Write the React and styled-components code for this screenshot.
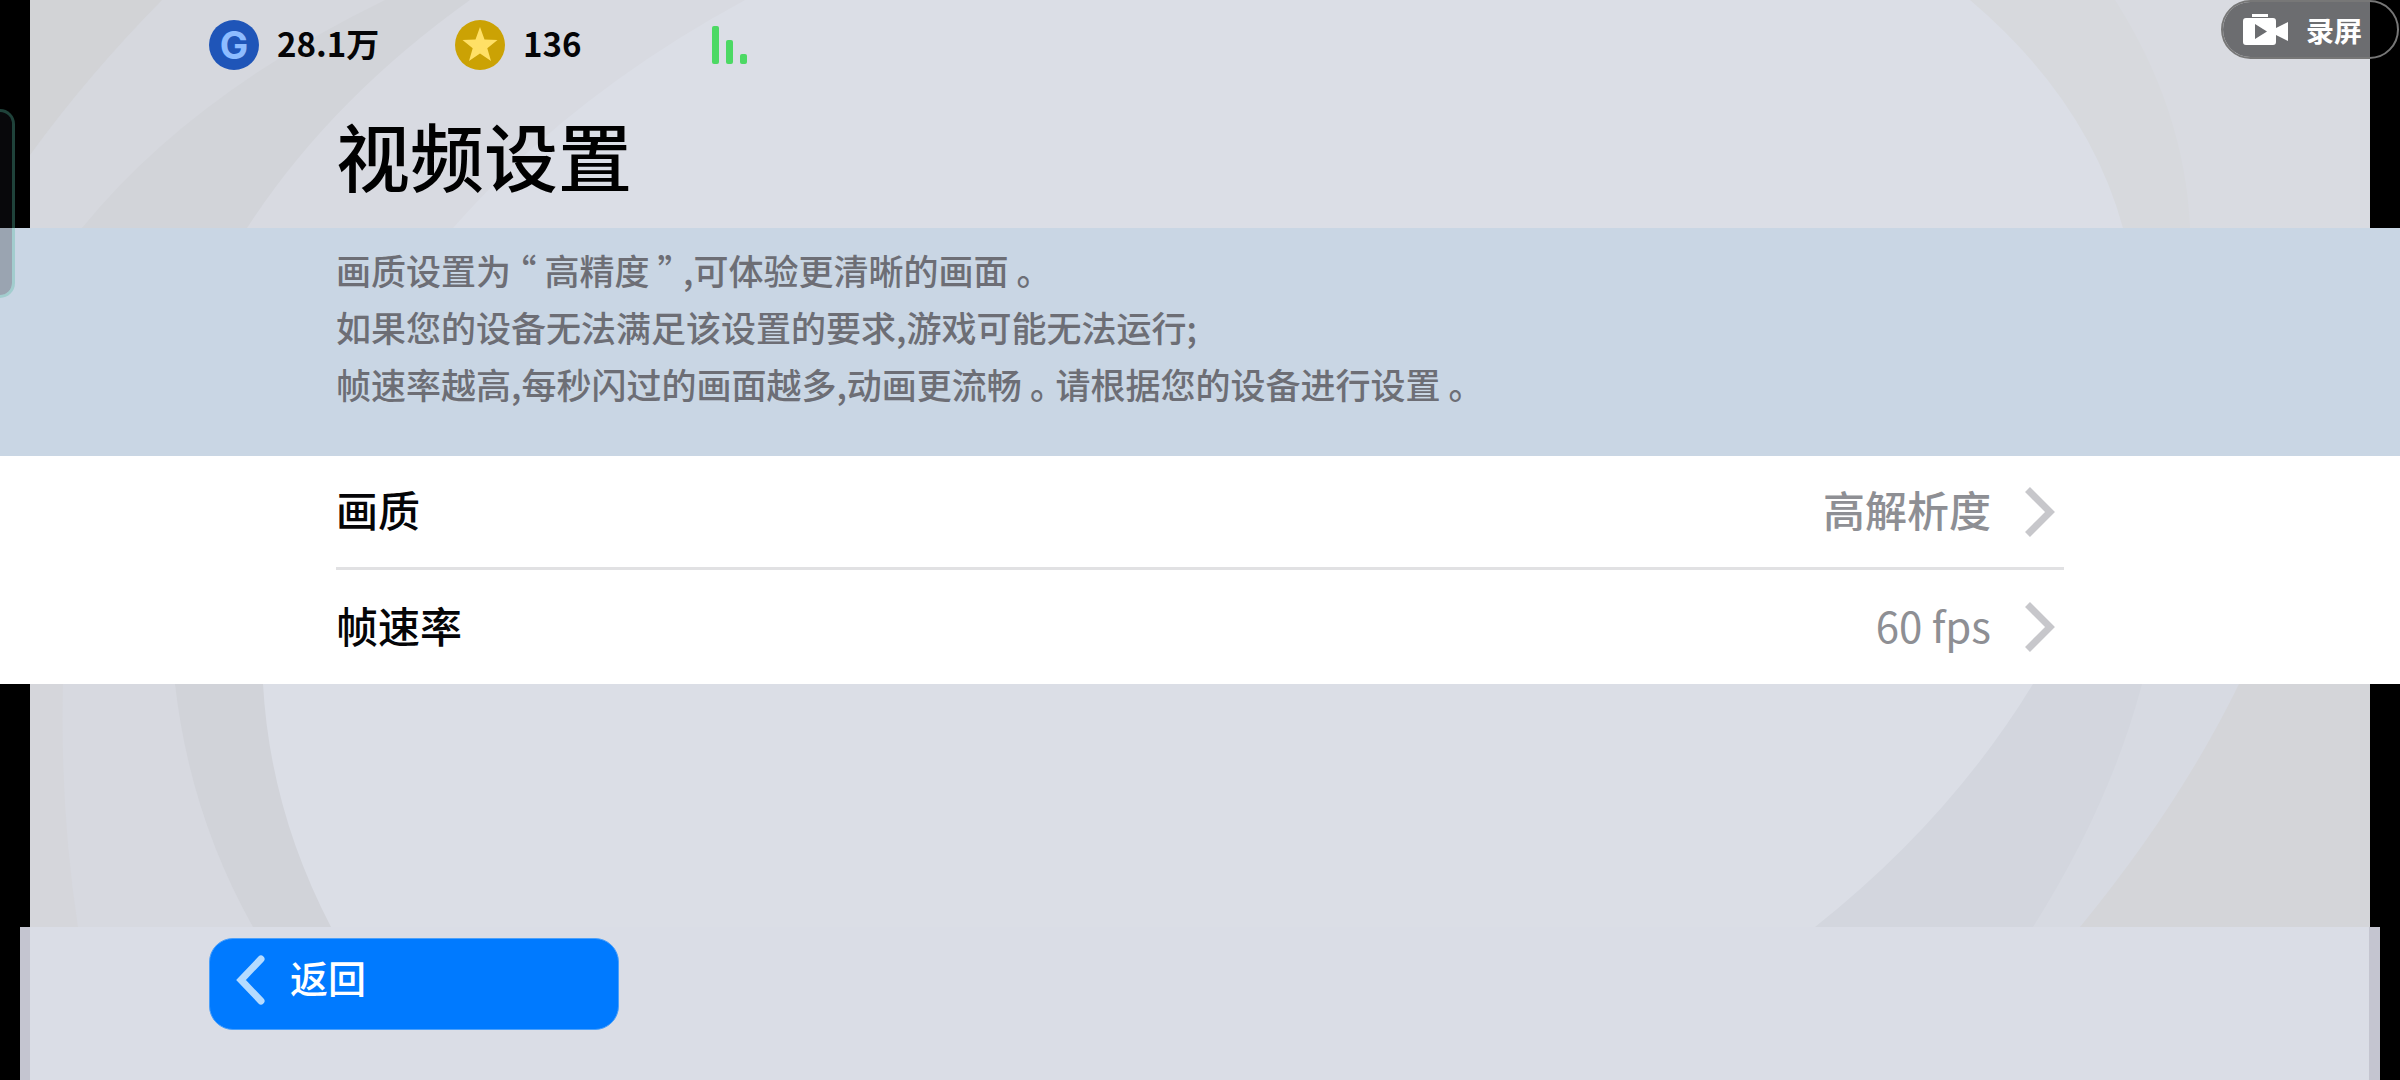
import React from "react";
import styled, { createGlobalStyle } from "styled-components";

const GlobalStyle = createGlobalStyle`
  * { box-sizing: border-box; }
  body {
    margin: 0;
    background: #000;
    color: #050507;
    font-family: "Noto Sans CJK SC", sans-serif;
  }
  button { font-family: inherit; color: inherit; }
`;

const Screen = styled.main`
  position: relative;
  isolation: isolate;
  min-height: 100vh;
  display: flex;
  flex-direction: column;
  overflow: hidden;
`;

const Backdrop = styled.svg`
  position: absolute;
  inset: 0;
  z-index: -1;
  width: 100%;
  height: 100%;
`;

const Header = styled.header`
  height: 228px;
  padding: 18px 336px 0 209px;
`;

const StatusBar = styled.div`
  display: flex;
  align-items: center;
  height: 54px;
`;

const Currency = styled.div`
  display: flex;
  align-items: center;
  gap: 18px;
  width: ${(p) => p.$width}px;
`;

const Amount = styled.span`
  padding-bottom: 4px;
  font-size: 33px;
  line-height: 50px;
  font-weight: 700;
`;

const Title = styled.h1`
  margin: 28px 0 0 127px;
  color: #000;
  font-size: 74px;
  line-height: 108px;
  font-weight: 500;
`;

const Notice = styled.section`
  height: 228px;
  padding: 13px 336px 0;
  background: #c9d6e4;
  color: #6d6e75;
  font-size: 35px;
  line-height: 57px;
  font-weight: 500;
`;

const NoticeLine = styled.p`
  margin: 0;
`;

const Mark = styled.span`
  padding: 0 8px;
  font-feature-settings: "halt";
`;

const Options = styled.ul`
  margin: 0;
  padding: 0 336px;
  list-style: none;
  background: #fff;
`;

const Option = styled.li`
  height: 114px;
  &:not(:last-child) { border-bottom: 3px solid #e1e1e3; }
`;

const OptionButton = styled.button`
  display: flex;
  align-items: center;
  width: 100%;
  height: 100%;
  padding: 0 9px 0 0;
  border: 0;
  background: none;
  font-size: 42px;
  line-height: 60px;
  text-align: left;
  cursor: pointer;
`;

const OptionName = styled.span`
  flex: 1;
  padding-bottom: 5px;
  font-weight: 500;
`;

const OptionValue = styled.span`
  margin-right: 34px;
  padding-bottom: 5px;
  color: #8e8f94;
  font-weight: ${(p) => (p.$numeric ? 400 : 500)};
`;

const Spacer = styled.div`
  flex: 1;
`;

const Footer = styled.footer`
  height: 153px;
  margin: 0 20px;
  padding: 11px 179px 0;
  border: solid #c4c5d0;
  border-width: 0 11px 0 10px;
  background: #dadde6;
`;

const BackButton = styled.button`
  display: flex;
  align-items: center;
  gap: 24px;
  width: 410px;
  height: 92px;
  padding: 0 26px 8px;
  border: 1px solid #4ba0fb;
  border-radius: 24px;
  background: #007aff;
  color: #fff;
  font-size: 38px;
  line-height: 54px;
  font-weight: 500;
  cursor: pointer;
`;

const BackLabel = styled.span`
  padding-bottom: 6px;
`;

const RecordButton = styled.button`
  position: absolute;
  top: 0;
  right: 1px;
  display: flex;
  align-items: center;
  gap: 17px;
  width: 178px;
  height: 59px;
  padding: 0 20px;
  border: 2px solid #777777;
  border-radius: 30px;
  background: rgba(0, 0, 0, 0.5);
  background-clip: padding-box;
  color: #fff;
  font-size: 28px;
  line-height: 40px;
  font-weight: 700;
  white-space: nowrap;
  cursor: pointer;
`;

const EdgeHandle = styled.div`
  position: absolute;
  top: 109px;
  left: 0;
  width: 15px;
  height: 189px;
  border: 3px solid rgba(90, 190, 165, 0.35);
  border-left: 0;
  border-radius: 0 16px 16px 0;
  background: rgba(30, 28, 40, 0.27);
  background-clip: padding-box;
`;

const CoinLetter = styled.text`
  font-family: Inter, sans-serif;
  font-size: 38px;
  font-weight: 700;
  text-anchor: middle;
  fill: #8dbcff;
`;

function Scenery() {
  return (
    <Backdrop viewBox="0 0 2400 1080" preserveAspectRatio="none" aria-hidden="true">
      <rect x="30" width="2340" height="1080" fill="#dbdee6" />
      <path d="M30 0H745Q570 95 453 228V300H30Z" fill="#d8dae1" />
      <path d="M30 0H470Q330 100 247 228V300H30Z" fill="#d2d4d9" />
      <path d="M30 0H385Q190 95 82 228V300H30Z" fill="#d6d8de" />
      <path d="M30 0H162Q88 75 30 155Z" fill="#d2d3d6" />
      <path d="M30 684H263Q270 810 331 927H30Z" fill="#d1d3d9" />
      <path d="M30 684H175Q190 815 253 927H30Z" fill="#d7d9e0" />
      <path d="M30 684H63Q60 810 78 927H30Z" fill="#d5d6db" />
      <path d="M1970 0Q2088 100 2123 228H2370V0Z" fill="#d7d9dd" />
      <path d="M2115 0Q2185 110 2190 228H2370V0Z" fill="#d9dbe1" />
      <path d="M2033 684Q1950 820 1815 927H2370V684Z" fill="#d3d6de" />
      <path d="M2142 684Q2110 805 2033 927H2370V684Z" fill="#d7dae2" />
      <path d="M2239 684Q2180 805 2080 927H2370V684Z" fill="#d4d5d9" />
    </Backdrop>
  );
}

function Chevron() {
  return (
    <svg width="30" height="50" viewBox="0 0 30 50" aria-hidden="true">
      <path d="M2.500 2.500L25 25L2.500 47.500" fill="none" stroke="#c7c7cb" strokeWidth="7" />
    </svg>
  );
}

const options = [
  { name: "画质", value: "高解析度" },
  { name: "帧速率", value: "60 fps", numeric: true },
];

export default function App() {
  return (
    <Screen lang="zh-CN">
      <GlobalStyle />
      <Scenery />
      <Header>
        <StatusBar>
          <Currency $width={246}>
            <svg width="50" height="50" viewBox="0 0 50 50" aria-hidden="true">
              <circle cx="25" cy="25" r="25" fill="#1f55b8" />
              <CoinLetter x="25" y="39">G</CoinLetter>
            </svg>
            <Amount>28.1万</Amount>
          </Currency>
          <Currency $width={257}>
            <svg width="50" height="50" viewBox="0 0 50 50" aria-hidden="true">
              <circle cx="25" cy="25" r="25" fill="#cba204" />
              <path
                d="M25 7L29.500 19.500L42.500 20L32.300 28.200L36 41L25 33.500L14 41L17.700 28.200L7.500 20L20.500 19.500Z"
                fill="#ffe066"
              />
            </svg>
            <Amount>136</Amount>
          </Currency>
          <svg width="36" height="38" viewBox="0 0 36 38" role="img" aria-label="信号">
            <rect x="0" y="0" width="7" height="38" rx="2" fill="#4cd964" />
            <rect x="14" y="14" width="7" height="24" rx="2" fill="#4cd964" />
            <rect x="28" y="28" width="7" height="10" rx="2" fill="#4cd964" />
          </svg>
        </StatusBar>
        <Title>视频设置</Title>
      </Header>

      <Notice>
        <NoticeLine>
          画质设置为<Mark>“</Mark>高精度<Mark>”</Mark>,可体验更清晰的画面<Mark>。</Mark>
        </NoticeLine>
        <NoticeLine>如果您的设备无法满足该设置的要求,游戏可能无法运行;</NoticeLine>
        <NoticeLine>
          帧速率越高,每秒闪过的画面越多,动画更流畅<Mark>。</Mark>请根据您的设备进行设置<Mark>。</Mark>
        </NoticeLine>
      </Notice>

      <Options>
        {options.map((option) => (
          <Option key={option.name}>
            <OptionButton type="button">
              <OptionName>{option.name}</OptionName>
              <OptionValue $numeric={option.numeric}>{option.value}</OptionValue>
              <Chevron />
            </OptionButton>
          </Option>
        ))}
      </Options>

      <Spacer />

      <Footer>
        <BackButton type="button">
          <svg width="30" height="50" viewBox="0 0 30 50" aria-hidden="true">
            <path
              d="M25 4L5 25L25 46"
              fill="none"
              stroke="#b5dbff"
              strokeWidth="7"
              strokeLinecap="round"
            />
          </svg>
          <BackLabel>返回</BackLabel>
        </BackButton>
      </Footer>

      <EdgeHandle />
      <RecordButton type="button">
        <svg width="46" height="32" viewBox="0 0 46 32" aria-hidden="true">
          <path
            d="M9 0H25V3H9ZM3 4H30Q33 4 33 7V14L45 8V27L33 21V28Q33 31 30 31H3Q0 31 0 28V7Q0 4 3 4ZM12 10V25L24 17.500Z"
            fill="#fff"
            fillRule="evenodd"
          />
        </svg>
        <span>录屏</span>
      </RecordButton>
    </Screen>
  );
}
